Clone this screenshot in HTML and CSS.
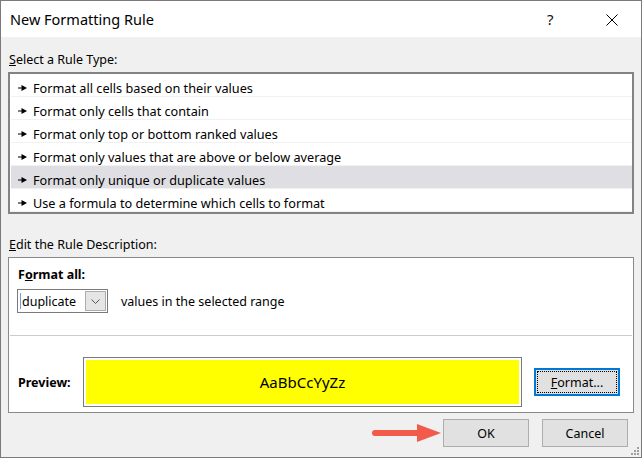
FILE: index.html
```html
<!DOCTYPE html>
<html>
<head>
<meta charset="utf-8">
<link rel="stylesheet" href="styles.css">
</head>
<body>
<div class="window">
  <div class="titlebar">
    <span class="title">New Formatting Rule</span>
    <span class="help">?</span>
    <svg class="close" width="12" height="12" viewBox="0 0 12 12"><path d="M0.5 0.5 L11.5 11.5 M11.5 0.5 L0.5 11.5" stroke="#000" stroke-width="1" fill="none"/></svg>
  </div>
  <div class="content">
    <div class="label label-top"><u>S</u>elect a Rule Type:</div>
    <div class="listbox">
      <div class="row"><svg class="bullet" width="9" height="6" viewBox="0 0 9 6"><path d="M0 2.5 H3.5 V0 L9 3 L3.5 6 V3.5 H0 Z" fill="#000"/></svg>Format all cells based on their values</div>
      <div class="row"><svg class="bullet" width="9" height="6" viewBox="0 0 9 6"><path d="M0 2.5 H3.5 V0 L9 3 L3.5 6 V3.5 H0 Z" fill="#000"/></svg>Format only cells that contain</div>
      <div class="row"><svg class="bullet" width="9" height="6" viewBox="0 0 9 6"><path d="M0 2.5 H3.5 V0 L9 3 L3.5 6 V3.5 H0 Z" fill="#000"/></svg>Format only top or bottom ranked values</div>
      <div class="row"><svg class="bullet" width="9" height="6" viewBox="0 0 9 6"><path d="M0 2.5 H3.5 V0 L9 3 L3.5 6 V3.5 H0 Z" fill="#000"/></svg>Format only values that are above or below average</div>
      <div class="row selected"><svg class="bullet" width="9" height="6" viewBox="0 0 9 6"><path d="M0 2.5 H3.5 V0 L9 3 L3.5 6 V3.5 H0 Z" fill="#000"/></svg>Format only unique or duplicate values</div>
      <div class="row"><svg class="bullet" width="9" height="6" viewBox="0 0 9 6"><path d="M0 2.5 H3.5 V0 L9 3 L3.5 6 V3.5 H0 Z" fill="#000"/></svg>Use a formula to determine which cells to format</div>
    </div>
    <div class="label label-edit"><u>E</u>dit the Rule Description:</div>
    <div class="descbox">
      <div class="bold-label">F<u>o</u>rmat all:</div>
      <div class="combo-row">
        <div class="combo">
          <span class="caret"></span>
          <span class="combo-text">duplicate</span>
          <span class="combo-btn"><svg width="9" height="5" viewBox="0 0 9 5"><path d="M0.5 0.5 L4.5 4.5 L8.5 0.5" stroke="#555" stroke-width="1" fill="none"/></svg></span>
        </div>
        <span class="combo-after">values in the selected range</span>
      </div>
      <div class="separator"></div>
      <div class="preview-row">
        <div class="bold-label preview-label">Preview:</div>
        <div class="preview-box"><div class="preview-fill">AaBbCcYyZz</div></div>
        <div class="btn btn-focus"><span class="focus-ring"><u>F</u>ormat...</span></div>
      </div>
    </div>
    <div class="footer">
      <div class="btn">OK</div>
      <div class="btn">Cancel</div>
    </div>
  </div>
  <svg class="annot-arrow" width="72" height="22" viewBox="0 0 72 22"><line x1="3" y1="11" x2="50" y2="11" stroke="#f25a4b" stroke-width="6" stroke-linecap="round"/><path d="M45 2 L69 11 L45 20 Z" fill="#f25a4b"/></svg>
  <svg class="grip" width="9" height="9" viewBox="0 0 9 9" fill="#a0a0a0"><rect x="6" y="0" width="2" height="2"/><rect x="3" y="3" width="2" height="2"/><rect x="6" y="3" width="2" height="2"/><rect x="0" y="6" width="2" height="2"/><rect x="3" y="6" width="2" height="2"/><rect x="6" y="6" width="2" height="2"/></svg>
</div>
</body>
</html>
```

FILE: styles.css
```css
* { box-sizing: border-box; }
html, body { margin: 0; padding: 0; }
body {
  width: 642px;
  height: 458px;
  font-family: "Noto Sans", "Liberation Sans", sans-serif;
  font-size: 12.5px;
  color: #000;
  background: #ffffff;
  overflow: hidden;
}
.window {
  position: relative;
  width: 642px;
  height: 458px;
  border: 1px solid #7a7a7a;
  background: #f0f0f0;
  display: flex;
  flex-direction: column;
}
.titlebar {
  height: 36px;
  background: #fff;
  display: flex;
  align-items: center;
  padding-left: 9px;
}
.title {
  font-size: 14.5px;
  flex: 1;
}
.help {
  font-size: 15px;
  width: 12px;
  margin-right: 47px;
  color: #111;
}
.close {
  margin-right: 23px;
  margin-top: 1px;
}
.content {
  flex: 1;
  padding: 0 7px;
  display: flex;
  flex-direction: column;
}
.label {
  height: 17px;
  line-height: 17px;
  padding-left: 1px;
}
.label-top { margin-top: 14px; }
.listbox {
  margin-top: 4px;
  height: 142px;
  border: 2px solid #838383;
  background: #fff;
  padding: 0 0 0 1px;
}
.row {
  height: 23px;
  line-height: 18px;
  padding-top: 5px;
  padding-left: 7px;
  border-bottom: 1px solid #f1f1f1;
  display: flex;
  align-items: center;
  white-space: nowrap;
  font-size: 12.7px;
}
.row.selected { background: #dfdfe3; }
.bullet { margin-right: 6px; flex: none; }
.label-edit { margin-top: 22px; }
.descbox {
  margin-top: 4px;
  height: 156px;
  border: 1px solid #8a8a8a;
  background: #fff;
  display: flex;
  flex-direction: column;
  padding: 8px 0 0 0;
}
.bold-label {
  font-weight: bold;
  height: 17px;
  line-height: 17px;
  padding-left: 9px;
}
.combo-row {
  margin-top: 6px;
  display: flex;
  align-items: center;
  padding-left: 8px;
}
.combo {
  width: 91px;
  height: 24px;
  border: 1px solid #7a7a7a;
  background: #fff;
  display: flex;
  align-items: center;
  position: relative;
}
.caret {
  width: 1px;
  height: 16px;
  background: #6aa0e0;
  margin-left: 2px;
}
.combo-text { flex: 1; padding-left: 1px; }
.combo-btn {
  width: 21px;
  height: 20px;
  margin-right: 1px;
  background: #e5e5e5;
  border: 1px solid #adadad;
  display: flex;
  align-items: center;
  justify-content: center;
}
.combo-after { margin-left: 13px; }
.separator {
  margin: 22px 1px 0 1px;
  height: 1px;
  background: #cbcbcb;
}
.preview-row {
  margin-top: 21px;
  display: flex;
  align-items: center;
}
.preview-label { width: 74px; }
.preview-box {
  width: 439px;
  height: 50px;
  border: 1px solid #7a7a7a;
  background: #fff;
  padding: 2px;
}
.preview-fill {
  height: 100%;
  background: #ffff00;
  display: flex;
  align-items: center;
  justify-content: center;
  font-size: 15px;
}
.btn {
  width: 86px;
  height: 28px;
  background: #e1e1e1;
  border: 1px solid #adadad;
  display: flex;
  align-items: center;
  justify-content: center;
}
.btn-focus {
  margin-left: 12px;
  border: 2px solid #0078d7;
  padding: 1px;
}
.focus-ring {
  width: 100%;
  height: 100%;
  border: 1px dotted #000;
  display: flex;
  align-items: center;
  justify-content: center;
}
.footer {
  margin-top: 6px;
  display: flex;
  justify-content: flex-end;
  gap: 13px;
  padding-right: 6px;
}
.annot-arrow {
  position: absolute;
  left: 371px;
  top: 421px;
}
.grip {
  position: absolute;
  right: 1px;
  bottom: 1px;
}
```
